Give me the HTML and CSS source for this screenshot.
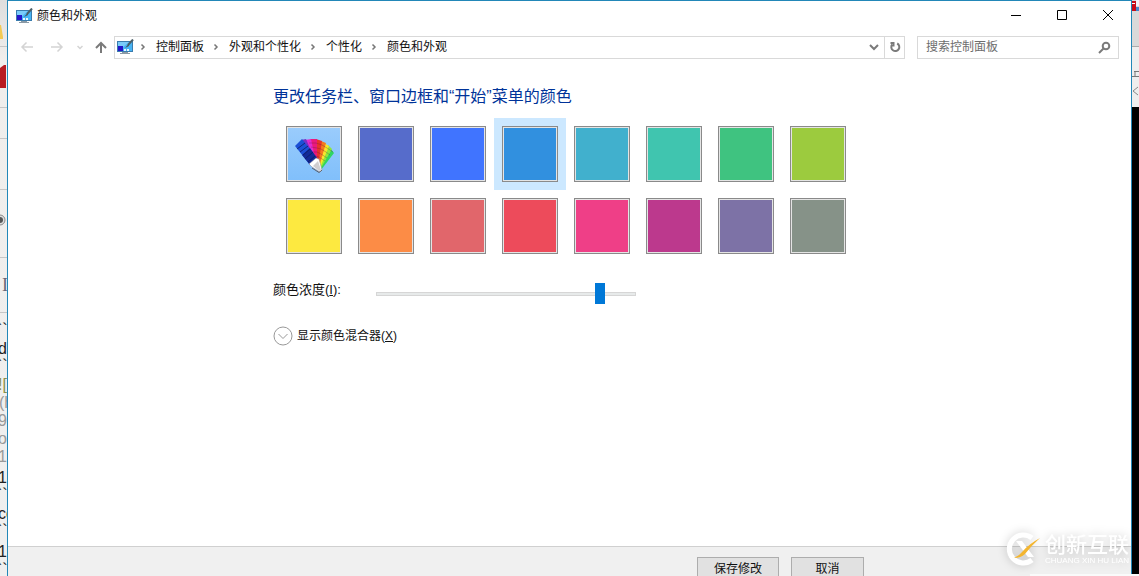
FILE: index.html
```html
<!DOCTYPE html>
<html lang="zh-CN">
<head>
<meta charset="utf-8">
<title>颜色和外观</title>
<link rel="stylesheet" href="styles.css">
</head>
<body>
<svg width="0" height="0" class="defs" aria-hidden="true">
  <defs>
    <symbol id="monitor" viewBox="0 0 17 16">
      <rect x="0.5" y="2.5" width="15" height="10" fill="#48b4f4" stroke="#3a7cae"/>
      <path d="M1 3h11L5 9H1z" fill="#7acbfa"/>
      <rect x="1" y="7" width="5" height="5" fill="#2416c8"/>
      <path d="M7 10h2v2H7zM10 10h2v2h-2z" fill="#e6f6ff"/>
      <path d="M5 13h6v1H5zM3 14h10v1H3z" fill="#8a9aa6"/>
      <path d="M16 0.5L11 6" stroke="#4b6069" stroke-width="2"/>
      <path d="M11.500 5L8 9l4-2z" fill="#47545b"/>
    </symbol>
    <symbol id="chevron" viewBox="0 0 6 8">
      <path d="M1.500 1.500L4 4L1.500 6.500" fill="none" stroke="#777" stroke-width="1.500"/>
    </symbol>
  </defs>
</svg>
<div class="desktop">
  <svg class="behind-left" aria-hidden="true">
    <path d="M0 25h1l2 12v2H0z" fill="#f2ca54"/>
    <path d="M0 68L4 65h2v23H0z" fill="#b81c22"/>
    <path d="M0 46.500h7M0 107.500h7M0 138.500h7M0 189.500h7M0 257.500h7M0 312.500h7" stroke="#c6c6c6"/>
    <circle cx="0" cy="220" r="5" fill="#ddd" stroke="#888"/>
    <circle cx="0" cy="220" r="3" fill="#555"/>
    <g class="serif"><text x="2" y="291">I</text></g>
    <g class="code">
      <text x="-3" y="335">``</text><text x="-2" y="354">d</text><text x="-3" y="371">``</text>
      <text x="-2" y="483">1</text><text x="-3" y="500">``</text><text x="-2" y="519">co</text>
      <text x="-3" y="536">``</text><text x="-2" y="557">1</text><text x="-3" y="575">``</text>
    </g>
    <g class="code faded">
      <text x="-2" y="390" class="olive">![</text><text x="-1" y="408">(h</text><text x="-2" y="426">9</text>
      <text x="-2" y="444">o</text><text x="-2" y="462">1</text>
    </g>
  </svg>

  <div class="window">
    <header class="titlebar">
      <svg class="app-icon"><use href="#monitor"/></svg>
      <h1 class="title">颜色和外观</h1>
      <div class="caption-buttons">
        <button type="button" aria-label="最小化"><svg width="12" height="12" viewBox="0 0 12 12"><path d="M1 5.500h10"/></svg></button>
        <button type="button" aria-label="最大化"><svg width="12" height="12" viewBox="0 0 12 12"><path d="M1.500 0.500h9v9h-9z"/></svg></button>
        <button type="button" aria-label="关闭"><svg width="12" height="12" viewBox="0 0 12 12"><path d="M1 0l10 10M11 0L1 10"/></svg></button>
      </div>
    </header>

    <nav class="toolbar" aria-label="导航">
      <div class="history">
        <button type="button" aria-label="后退" disabled><svg width="14" height="12" viewBox="0 0 14 12"><path d="M13 6H2M6.500 1.500L2 6l4.500 4.500"/></svg></button>
        <button type="button" aria-label="前进" disabled><svg width="14" height="12" viewBox="0 0 14 12"><path d="M1 6h11M7.500 1.500L12 6l-4.500 4.500"/></svg></button>
        <button type="button" class="recent" aria-label="最近的位置" disabled><svg width="6" height="5" viewBox="0 0 6 5"><path d="M0.500 1L3 3.500L5.500 1"/></svg></button>
        <button type="button" class="up" aria-label="上移"><svg width="12" height="14" viewBox="0 0 12 14"><path d="M6 13V3M1 8l5-5l5 5"/></svg></button>
      </div>
      <div class="address">
        <svg class="app-icon"><use href="#monitor"/></svg>
        <ol class="crumbs">
          <li><svg class="sep"><use href="#chevron"/></svg><a href="#">控制面板</a></li>
          <li><svg class="sep"><use href="#chevron"/></svg><a href="#">外观和个性化</a></li>
          <li><svg class="sep"><use href="#chevron"/></svg><a href="#">个性化</a></li>
          <li><svg class="sep"><use href="#chevron"/></svg><a href="#">颜色和外观</a></li>
        </ol>
        <button type="button" class="drop" aria-label="以前的位置"><svg width="10" height="7" viewBox="0 0 10 7"><path d="M1 1l4 4l4-4"/></svg></button>
        <button type="button" class="refresh" aria-label="刷新"><svg width="12" height="12" viewBox="0 0 12 12"><path d="M8.200 2.500A4 4 0 1 1 3.200 3.500M1.500 2h3v3.500"/></svg></button>
      </div>
      <form class="search">
        <input type="search" placeholder="搜索控制面板" aria-label="搜索控制面板">
        <button aria-label="搜索"><svg width="13" height="13" viewBox="0 0 13 13"><circle cx="8" cy="5" r="3.300"/><path d="M5.500 7.500L1 12"/></svg></button>
      </form>
    </nav>

    <main class="content">
      <div class="column">
        <h2 class="heading">更改任务栏、窗口边框和“开始”菜单的颜色</h2>
        <div class="swatches" role="radiogroup" aria-label="颜色">
          <label class="swatch auto"><input type="radio" name="color" aria-label="自动">
            <svg width="42" height="40" viewBox="0 0 42 40" aria-hidden="true">
              <path d="M25 34L37 14l4 5L28 36z" fill="#2fd662"/>
              <path d="M25 33L35 11l4 4L28 34z" fill="#8fe83c"/>
              <path d="M24 32L31 9l5 3L27 34z" fill="#f8e72d"/>
              <path d="M23 31L28 7l5 2L26 33z" fill="#f5791f"/>
              <path d="M21 30L23 5l6 2L25 32z" fill="#e8322c"/>
              <path d="M19 28L17 5l7 0L24 31z" fill="#ea1a7c"/>
              <path d="M18 27L12 6l6-1L23 29z" fill="#e22bd0"/>
              <path d="M17 27L8 6l5-1L22 26z" fill="#7433c6"/>
              <path d="M17 31L2 12L9 5L24 24z" fill="#1c50d6"/>
              <path d="M17 31L9 21L17 14L24 24z" fill="#122a97"/>
              <path d="M4 15l8-6M7 18l8-6M10 21l7-6M12 25l8-7M15 28l7-6" stroke="#0d1a63" stroke-width="0.800" fill="none"/>
              <path d="M16 9l7 0l6 2l5 3l6 4M18 13l6 1l4 1l5 3l4 3M20 18l4 0l4 2l6 4M22 22l4 1l6 4" fill="none" stroke="#501840" stroke-width="0.600" opacity="0.500"/>
              <path d="M16 30L23 24L26 25L29 36L27 38L19 33z" fill="#fff" stroke="#8b8795" stroke-width="0.500"/>
              <path d="M20 32L25 27L28 36L26 37z" fill="#d0ced0"/>
              <path d="M19 34L26 38.500L29 36" fill="none" stroke="#4d4545" stroke-width="0.800"/>
            </svg>
          </label>
          <label class="swatch indigo"><input type="radio" name="color" aria-label="靛蓝"></label>
          <label class="swatch blue"><input type="radio" name="color" aria-label="蓝色"></label>
          <label class="swatch sky"><input type="radio" name="color" aria-label="天蓝" checked></label>
          <label class="swatch cyan"><input type="radio" name="color" aria-label="青色"></label>
          <label class="swatch teal"><input type="radio" name="color" aria-label="蓝绿"></label>
          <label class="swatch green"><input type="radio" name="color" aria-label="绿色"></label>
          <label class="swatch lime"><input type="radio" name="color" aria-label="黄绿"></label>
          <label class="swatch yellow"><input type="radio" name="color" aria-label="黄色"></label>
          <label class="swatch orange"><input type="radio" name="color" aria-label="橙色"></label>
          <label class="swatch coral"><input type="radio" name="color" aria-label="珊瑚"></label>
          <label class="swatch red"><input type="radio" name="color" aria-label="红色"></label>
          <label class="swatch pink"><input type="radio" name="color" aria-label="粉色"></label>
          <label class="swatch magenta"><input type="radio" name="color" aria-label="洋红"></label>
          <label class="swatch violet"><input type="radio" name="color" aria-label="紫色"></label>
          <label class="swatch gray"><input type="radio" name="color" aria-label="灰色"></label>
        </div>
        <div class="intensity">
          <label for="intensity">颜色浓度(<u>I</u>):</label>
          <input id="intensity" type="range" min="0" max="1000" value="878">
        </div>
        <button type="button" class="mixer">
          <svg width="20" height="20" viewBox="0 0 20 20"><circle cx="10" cy="10" r="9"/><path d="M5.500 8l4.500 4.500L14.500 8"/></svg>
          <span>显示颜色混合器(<u>X</u>)</span>
        </button>
      </div>
    </main>

    <footer class="footer">
      <div class="column actions">
        <button type="button" class="save">保存修改</button>
        <button type="button" class="cancel">取消</button>
      </div>
    </footer>
  </div>

  <svg class="behind-right" aria-hidden="true">
    <path d="M0 0h7v107H0z" fill="#d9d9d9"/>
    <path d="M0 47h7v60H0z" fill="#eee"/>
    <path d="M0 1h4v10H0z" fill="#c70c19"/>
    <path d="M4 7h3v4H4z" fill="#4685c9"/>
    <path d="M4 0h3v6H4z" fill="#f1f4fa"/>
    <path d="M0 3.500h3" stroke="#fff"/>
    <path d="M0 46.500h7" stroke="#aaa"/>
    <path d="M0 76.500h7M2 71.500h5M3 71v5" stroke="#777" fill="none"/>
    <path d="M6 87L1 91l5 4" stroke="#888" fill="none"/>
  </svg>
</div>

<div class="watermark">
  <svg width="38" height="36" viewBox="0 0 38 36" aria-hidden="true">
    <path d="M28 7A14 14 0 1 0 28 29" fill="none" stroke="#fff" stroke-width="5"/>
    <path d="M12 10h6l12 16h-6z" fill="#fff"/>
    <path d="M36 7Q25 13 19 20Q16 24 10 27Q17 27 21 23Q28 14 36 7z" fill="#f3b530"/>
  </svg>
  <div class="brand"><span class="brand-name">创新互联</span><span class="brand-sub">CHUANG XIN HU LIAN</span></div>
</div>
<div class="edge"></div>
</body>
</html>
```
FILE: styles.css
```css
* { box-sizing: border-box; }

body {
  margin: 0;
  overflow: hidden;
  font: 12px/16px "Liberation Sans", "Noto Sans CJK SC", sans-serif;
  color: #111;
}

button {
  margin: 0;
  padding: 0;
  border: 0;
  background: none;
  font: inherit;
  color: inherit;
}

svg { display: block; }
.defs { position: absolute; }

.desktop {
  display: grid;
  grid-template-columns: 7px minmax(0, 1fr) 7px;
  height: 100vh;
}

.behind-left, .behind-right {
  width: 7px;
  height: 100%;
  overflow: hidden;
}
.behind-left { background: linear-gradient(#dedede, #f0eeec 60px, #efefef); }
.behind-right { background: #000; }
.code { font-size: 16px; fill: #222; }
.faded { fill: #999; }
.olive { fill: #8a8f4a; }
.serif { font: 18px "Liberation Serif", serif; fill: #667; }

.window {
  display: flex;
  flex-direction: column;
  min-height: 0;
  overflow: hidden;
  background: #fff;
  border: 1px solid #2287b8;
  border-bottom: 0;
}

.titlebar {
  display: flex;
  align-items: center;
  gap: 4px;
  height: 29px;
  flex: none;
  padding-left: 8px;
}
.app-icon { width: 17px; height: 16px; flex: none; }
.title { margin: 0; font-size: 12px; font-weight: 400; line-height: 16px; }
.caption-buttons { display: flex; margin-left: auto; }
.caption-buttons button {
  display: grid;
  place-items: center;
  width: 46px;
  height: 28px;
}
.caption-buttons svg { fill: none; stroke: #000; stroke-width: 1; }

.toolbar {
  display: flex;
  align-items: center;
  height: 34px;
  flex: none;
  padding: 0 12px;
}
.toolbar button { display: grid; place-items: center; }
.toolbar button svg { fill: none; stroke: #7a7a7a; stroke-width: 2; }
.history { display: flex; align-items: center; width: 94px; flex: none; }
.history button { width: 14px; margin-right: 16px; }
.history button:disabled svg { stroke: #d4d4d4; stroke-width: 1.5; }
.history .recent { width: 6px; margin: 0 12px 0 -3px; }
.history .up { width: 12px; margin: 0; }

.address {
  display: flex;
  align-items: center;
  flex: 1;
  min-width: 0;
  height: 23px;
  margin-right: 12px;
  padding-left: 2px;
  border: 1px solid #d9d9d9;
}
.crumbs { display: flex; flex: 1; margin: 0; padding: 0; list-style: none; }
.crumbs li { display: flex; align-items: center; }
.crumbs a { color: inherit; text-decoration: none; white-space: nowrap; }
.sep { width: 6px; height: 8px; margin: 0 10px 0 9px; flex: none; }
.crumbs li:first-child .sep { margin-left: 6px; }
.drop { width: 20px; height: 21px; }
.refresh { width: 20px; height: 21px; border-left: 1px solid #d9d9d9; }

.search {
  display: flex;
  width: 202px;
  height: 23px;
  flex: none;
  border: 1px solid #d9d9d9;
}
.search input {
  flex: 1;
  min-width: 0;
  padding: 0 0 0 8px;
  border: 0;
  outline: 0;
  background: none;
  font: inherit;
}
.search input::placeholder { color: #6d6d6d; }
.search button { width: 28px; }

.content { flex: 1; min-height: 0; padding-top: 21px; }
.column { width: 100%; max-width: 593px; margin: 0 auto; }
.heading {
  margin: 0;
  color: #003399;
  font-size: 16px;
  font-weight: 400;
  line-height: 24px;
}

.swatches {
  display: grid;
  grid-template-columns: repeat(8, 72px);
  margin: 9px 0 0 5px;
}
.swatch { display: grid; padding: 8px; }
.swatch:has(:checked) { background: #cce8ff; }
.swatch input, .swatch svg { grid-area: 1 / 1; }
.swatch svg { place-self: center; }
.swatch input {
  appearance: none;
  width: 56px;
  height: 56px;
  margin: 0;
  border: 1px solid #8a8a8a;
  box-shadow: inset 0 0 0 1px #e4e4e4;
  background: var(--tone);
}
.auto { --tone: linear-gradient(#9accfc, #80bffb); }
.indigo { --tone: #566ccb; }
.blue { --tone: #4074ff; }
.sky { --tone: #3190df; }
.cyan { --tone: #41b0cd; }
.teal { --tone: #40c5af; }
.green { --tone: #3fc380; }
.lime { --tone: #9ccb3e; }
.yellow { --tone: #fde940; }
.orange { --tone: #fc8c46; }
.coral { --tone: #e1666b; }
.red { --tone: #ed4b5b; }
.pink { --tone: #ef3f87; }
.magenta { --tone: #bc398d; }
.violet { --tone: #7d72a6; }
.gray { --tone: #869288; }

.intensity { display: flex; align-items: flex-start; margin-top: 18px; }
.intensity label { width: 103px; font-size: 13px; line-height: 20px; }
.intensity input {
  appearance: none;
  width: 260px;
  height: 21px;
  margin: 3px 0 0;
  background: none;
}
.intensity input::-webkit-slider-runnable-track {
  height: 4px;
  border: 1px solid #d6d6d6;
  background: #e7eaea;
}
.intensity input::-webkit-slider-thumb {
  appearance: none;
  width: 10px;
  height: 21px;
  margin-top: -10px;
  background: #0078d7;
}

.mixer { display: flex; align-items: center; gap: 4px; margin-top: 22px; }
.mixer svg { fill: none; stroke: #999; stroke-width: 1; }

.footer {
  height: 30px;
  flex: none;
  padding-top: 10px;
  background: #f0f0f0;
  border-top: 1px solid #d0d0d0;
}
.actions { display: flex; justify-content: flex-end; gap: 12px; padding-right: 2px; }
.actions button {
  height: 24px;
  flex: none;
  background: #e1e1e1;
  border: 1px solid #adadad;
}
.save { width: 82px; }
.cancel { width: 73px; }

.watermark {
  position: fixed;
  right: 10px;
  bottom: 9px;
  display: flex;
  align-items: center;
  gap: 3px;
  color: #fff;
  filter: drop-shadow(0 0 5px rgba(0, 0, 0, 0.2));
}
.brand { display: flex; flex-direction: column; width: 84px; }
.brand-name { font-size: 21px; font-weight: 500; line-height: 24px; white-space: nowrap; }
.brand-sub { font-size: 8px; line-height: 8px; white-space: nowrap; }
.edge {
  position: fixed;
  right: 0;
  bottom: 0;
  width: 109px;
  height: 2px;
  background: #fafafa;
}
```
